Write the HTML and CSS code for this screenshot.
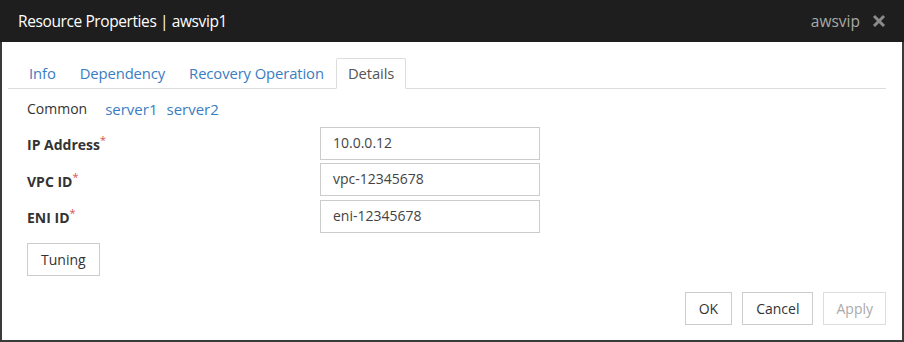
FILE: index.html
```html
<!DOCTYPE html>
<html lang="en">
<head>
  <meta charset="UTF-8">
  <title>Resource Properties | awsvip1</title>
  <link rel="stylesheet" href="styles.css">
</head>
<body>
  <div class="dialog">
    <div class="dialog-header">
      <span class="dialog-title">Resource Properties | awsvip1</span>
      <span class="dialog-type">awsvip</span>
      <svg class="close-icon" width="14" height="14" viewBox="0 0 14 14">
        <path d="M2 2 L12 12 M12 2 L2 12" stroke="#8a8a8a" stroke-width="3" />
      </svg>
    </div>

    <div class="dialog-body">
      <ul class="tabs">
        <li class="tab">Info</li>
        <li class="tab">Dependency</li>
        <li class="tab">Recovery Operation</li>
        <li class="tab active">Details</li>
      </ul>

      <div class="servers">
        <span class="server current">Common</span>
        <span class="server">server1</span>
        <span class="server">server2</span>
      </div>

      <div class="form-row">
        <label class="label">IP Address<span class="req">*</span></label>
        <div class="input">10.0.0.12</div>
      </div>
      <div class="form-row">
        <label class="label">VPC ID<span class="req">*</span></label>
        <div class="input">vpc-12345678</div>
      </div>
      <div class="form-row">
        <label class="label">ENI ID<span class="req">*</span></label>
        <div class="input">eni-12345678</div>
      </div>

      <button type="button" class="btn tuning">Tuning</button>

      <div class="footer">
        <button type="button" class="btn">OK</button>
        <button type="button" class="btn">Cancel</button>
        <button type="button" class="btn disabled">Apply</button>
      </div>
    </div>
  </div>
</body>
</html>
```

FILE: styles.css
```css
body {
  margin: 0;
  background: #fff;
  font-family: "Open Sans", "Noto Sans", sans-serif;
  font-size: 14px;
  color: #333;
}

.dialog {
  width: 904px;
  height: 342px;
  box-sizing: border-box;
  border: 2px solid #3a3a3a;
  border-top: none;
  display: flex;
  flex-direction: column;
}

.dialog-header {
  height: 42px;
  background: #1e1e1e;
  display: flex;
  align-items: center;
  padding: 0 18px 0 18px;
  margin: 0 -2px;
}

.dialog-title {
  color: #fff;
  font-size: 15.5px;
  flex: 1;
  letter-spacing: -0.4px;
}

.dialog-type {
  color: #a8a8a8;
  font-size: 15.5px;
  margin-right: 12px;
}

.dialog-body {
  flex: 1;
  padding: 16px 16px 0 6px;
  display: flex;
  flex-direction: column;
}

.tabs {
  list-style: none;
  margin: 0;
  padding: 0;
  display: flex;
  border-bottom: 1px solid #ddd;
}

.tab {
  font-size: 14.8px;
  line-height: 19px;
  padding: 5px 11px 5px;
  color: #3a7dc1;
  border: 1px solid transparent;
  border-bottom: none;
  margin-bottom: -1px;
  letter-spacing: -0.1px;
}

.tab:first-child {
  margin-left: 9px;
}

.tab.active {
  color: #555;
  background: #fff;
  border-color: #ddd;
  border-bottom: 1px solid #fff;
  border-radius: 2px 2px 0 0;
}

.servers {
  display: flex;
  gap: 9px;
  padding: 10px 0 0 19px;
  height: 24px;
}

.server {
  color: #3a7dc1;
  font-size: 15px;
}

.server.current {
  color: #333;
  font-size: 14px;
  margin-right: 9px;
}

.form-row {
  display: flex;
  align-items: center;
  padding-left: 19px;
  margin-top: 3.5px;
}

.form-row:first-of-type {
  margin-top: 7px;
}

.label {
  width: 293px;
  font-weight: bold;
  color: #333;
}

.req {
  color: #d9534f;
  font-size: 11px;
  vertical-align: 6px;
  font-weight: normal;
}

.input {
  width: 220px;
  height: 33px;
  box-sizing: border-box;
  border: 1px solid #ccc;
  padding: 5px 12px;
  color: #444;
}

.btn {
  font-family: inherit;
  font-size: 14px;
  color: #333;
  background: #fff;
  border: 1px solid #ccc;
  height: 33px;
  padding: 0 13px;
}

.tuning {
  align-self: flex-start;
  margin: 10px 0 0 19px;
  padding: 0 13px;
}

.footer {
  display: flex;
  justify-content: flex-end;
  gap: 10px;
  margin-top: 16px;
}

.btn.disabled {
  color: #aaa;
  border-color: #ddd;
  padding: 0 12px;
}
```
